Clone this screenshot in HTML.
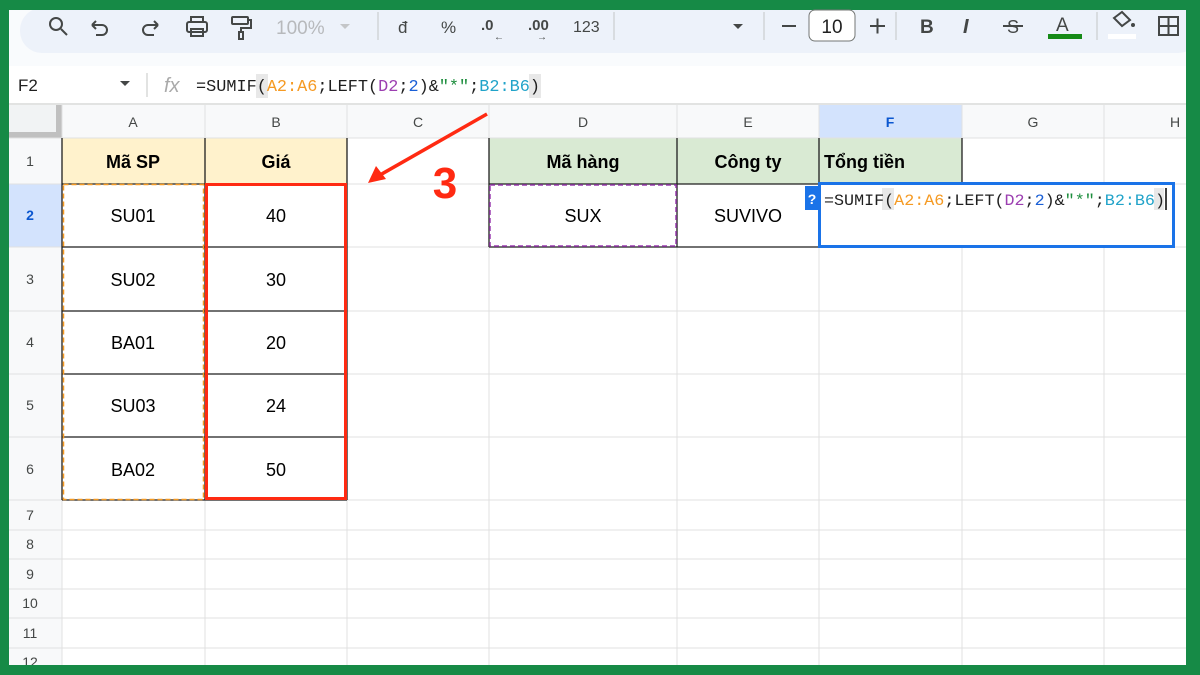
<!DOCTYPE html>
<html><head><meta charset="utf-8"><style>
html,body{margin:0;padding:0;width:1200px;height:675px;overflow:hidden;background:#168a46}
svg{display:block}
text{font-family:"Liberation Sans",Arial,sans-serif}
.m{font-family:"Liberation Mono","DejaVu Sans Mono",monospace}
</style></head><body>
<svg width="1200" height="675" viewBox="0 0 1200 675" xmlns="http://www.w3.org/2000/svg">
<rect x="0" y="0" width="1200" height="675" fill="#168a46"/>
<rect x="9" y="9" width="1177" height="656" fill="#ffffff"/>
<rect x="9" y="9" width="1177" height="57" fill="#f9fbfd"/>
<rect x="20" y="8" width="1180" height="45" rx="22" fill="#edf2fa"/>
<rect x="9" y="8" width="1177" height="2" fill="#168a46"/>
<g fill="none" stroke="#444746" stroke-width="2">
<circle cx="56" cy="24" r="6"/><line x1="61" y1="29" x2="67" y2="35"/>
<path d="M92 25 l4 -4 M92 25 l4 4 M92 25 h10 a5 5 0 0 1 0 10 h-6"/>
<path d="M158 25 l-4 -4 M158 25 l-4 4 M158 25 h-10 a5 5 0 0 0 0 10 h6"/>
<rect x="187" y="22" width="20" height="10" rx="2"/><rect x="191" y="17" width="12" height="5"/><rect x="191" y="29" width="12" height="7"/>
<rect x="232" y="17" width="16" height="7" rx="1"/><path d="M248 20 h3 v8 h-10 v4"/><rect x="239" y="32" width="4" height="7"/>
</g>
<text x="276" y="34" font-size="19" fill="#b7b9bc">100%</text>
<path d="M340 24 l5 5 l5 -5z" fill="#c4c6c8"/>
<line x1="378" y1="12" x2="378" y2="40" stroke="#c4c7c5"/>
<text x="398" y="33" font-size="17" fill="#444746">đ</text>
<text x="441" y="33" font-size="17" fill="#444746">%</text>
<text x="481" y="30" font-size="15" font-weight="bold" fill="#444746">.0</text>
<text x="494" y="40" font-size="10" fill="#444746">←</text>
<text x="528" y="30" font-size="15" font-weight="bold" fill="#444746">.00</text>
<text x="537" y="40" font-size="10" fill="#444746">→</text>
<text x="573" y="32" font-size="16" fill="#444746">123</text>
<line x1="614" y1="12" x2="614" y2="40" stroke="#c4c7c5"/>
<path d="M733 24 l5 5 l5 -5z" fill="#444746"/>
<line x1="764" y1="12" x2="764" y2="40" stroke="#c4c7c5"/>
<line x1="782" y1="26" x2="796" y2="26" stroke="#444746" stroke-width="2"/>
<rect x="809" y="10" width="46" height="31" rx="6" fill="#fff" stroke="#747775"/>
<text x="832" y="33" font-size="19" fill="#1f1f1f" text-anchor="middle">10</text>
<path d="M870 26 h15 M877.5 18.5 v15" stroke="#444746" stroke-width="2"/>
<line x1="896" y1="12" x2="896" y2="40" stroke="#c4c7c5"/>
<text x="920" y="33" font-size="19" font-weight="bold" fill="#444746">B</text>
<text x="963" y="33" font-size="20" font-style="italic" font-family="Liberation Serif" font-weight="bold" fill="#444746">I</text>
<text x="1007" y="33" font-size="18" fill="#444746">S</text><line x1="1003" y1="26" x2="1023" y2="26" stroke="#444746" stroke-width="2"/>
<text x="1056" y="31" font-size="19" fill="#444746">A</text><rect x="1048" y="34" width="34" height="5" fill="#168a17"/>
<line x1="1097" y1="12" x2="1097" y2="40" stroke="#c4c7c5"/>
<path d="M1114 18 l8 -6 l8 8 l-8 6 z" fill="none" stroke="#444746" stroke-width="2"/><circle cx="1133" cy="25" r="2" fill="#444746"/>
<rect x="1108" y="34" width="28" height="5" fill="#fff"/>
<g fill="none" stroke="#444746" stroke-width="2"><rect x="1159" y="17" width="19" height="18"/><path d="M1168.5 17 v18 M1159 26 h19"/></g>
<rect x="9" y="66" width="1177" height="36" fill="#fff"/>
<text x="18" y="91" font-size="17" fill="#1f1f1f">F2</text>
<path d="M120 81 l5 5 l5 -5z" fill="#444746"/>
<line x1="147" y1="73" x2="147" y2="97" stroke="#c4c7c5"/>
<text x="164" y="92" font-size="20" font-style="italic" font-family="Liberation Serif" fill="#aaa">fx</text>
<rect x="256" y="74" width="12" height="24" fill="#e8e8e8"/><rect x="529" y="74" width="12" height="24" fill="#e8e8e8"/>
<text x="196" y="91" font-size="17" class="m" textLength="344" lengthAdjust="spacingAndGlyphs"><tspan fill="#1f1f1f">=SUMIF(</tspan><tspan fill="#f59a23">A2:A6</tspan><tspan fill="#1f1f1f">;LEFT(</tspan><tspan fill="#9c3fb1">D2</tspan><tspan fill="#1f1f1f">;</tspan><tspan fill="#1a5fd6">2</tspan><tspan fill="#1f1f1f">)&amp;</tspan><tspan fill="#1e8e3e">"*"</tspan><tspan fill="#1f1f1f">;</tspan><tspan fill="#21a3c9">B2:B6</tspan><tspan fill="#1f1f1f">)</tspan></text>
<line x1="9" y1="104" x2="1186" y2="104" stroke="#c4c7c5"/>
<rect x="9" y="105" width="53" height="33" fill="#f1f3f4"/>
<rect x="56" y="105" width="6" height="33" fill="#c0c0c0"/><rect x="9" y="132" width="53" height="6" fill="#c0c0c0"/>
<rect x="62" y="105" width="1124" height="33" fill="#f8f9fa"/>
<rect x="819" y="105" width="143" height="33" fill="#d3e3fd"/>
<rect x="9" y="138" width="53" height="527" fill="#f8f9fa"/>
<rect x="9" y="184" width="53" height="63" fill="#d3e3fd"/>
<rect x="62" y="138" width="285" height="46" fill="#fff2cc"/>
<rect x="489" y="138" width="473" height="46" fill="#d9ead3"/>
<g stroke="#e1e1e1" stroke-width="1">
<line x1="62" y1="105" x2="62" y2="665"/><line x1="205" y1="105" x2="205" y2="665"/><line x1="347" y1="105" x2="347" y2="665"/>
<line x1="489" y1="105" x2="489" y2="665"/><line x1="677" y1="105" x2="677" y2="665"/><line x1="819" y1="105" x2="819" y2="665"/>
<line x1="962" y1="105" x2="962" y2="665"/><line x1="1104" y1="105" x2="1104" y2="665"/>
<line x1="9" y1="138" x2="1186" y2="138"/><line x1="9" y1="184" x2="1186" y2="184"/><line x1="9" y1="247" x2="1186" y2="247"/>
<line x1="9" y1="311" x2="1186" y2="311"/><line x1="9" y1="374" x2="1186" y2="374"/><line x1="9" y1="437" x2="1186" y2="437"/>
<line x1="9" y1="500" x2="1186" y2="500"/><line x1="9" y1="530" x2="1186" y2="530"/><line x1="9" y1="559" x2="1186" y2="559"/>
<line x1="9" y1="589" x2="1186" y2="589"/><line x1="9" y1="618" x2="1186" y2="618"/><line x1="9" y1="648" x2="1186" y2="648"/>
</g>
<g stroke="#1f1f1f" stroke-width="1.3">
<line x1="62" y1="184" x2="347" y2="184"/><line x1="62" y1="247" x2="347" y2="247"/><line x1="62" y1="311" x2="347" y2="311"/>
<line x1="62" y1="374" x2="347" y2="374"/><line x1="62" y1="437" x2="347" y2="437"/><line x1="62" y1="500" x2="347" y2="500"/>
<line x1="205" y1="138" x2="205" y2="500"/><line x1="347" y1="138" x2="347" y2="500"/><line x1="62" y1="138" x2="62" y2="500"/>
<line x1="489" y1="138" x2="489" y2="247"/><line x1="677" y1="138" x2="677" y2="247"/><line x1="819" y1="138" x2="819" y2="247"/>
<line x1="962" y1="138" x2="962" y2="184"/>
<line x1="489" y1="184" x2="962" y2="184"/><line x1="489" y1="247" x2="819" y2="247"/>
</g>
<g font-size="14" fill="#444746" text-anchor="middle">
<text x="133" y="127">A</text><text x="276" y="127">B</text><text x="418" y="127">C</text><text x="583" y="127">D</text>
<text x="748" y="127">E</text><text x="890" y="127" font-weight="bold" fill="#0b57d0">F</text><text x="1033" y="127">G</text><text x="1175" y="127">H</text>
<text x="30" y="166">1</text><text x="30" y="220" font-weight="bold" fill="#0b57d0">2</text><text x="30" y="284">3</text><text x="30" y="347">4</text>
<text x="30" y="410">5</text><text x="30" y="474">6</text><text x="30" y="520">7</text><text x="30" y="549">8</text><text x="30" y="579">9</text>
<text x="30" y="608">10</text><text x="30" y="638">11</text><text x="30" y="667">12</text>
</g>
<g font-size="18" fill="#000" text-anchor="middle">
<text x="133" y="168" font-weight="bold">Mã SP</text><text x="276" y="168" font-weight="bold">Giá</text>
<text x="583" y="168" font-weight="bold">Mã hàng</text><text x="748" y="168" font-weight="bold">Công ty</text>
<text x="824" y="168" font-weight="bold" text-anchor="start">Tổng tiền</text>
<text x="133" y="222">SU01</text><text x="276" y="222">40</text>
<text x="133" y="286">SU02</text><text x="276" y="286">30</text>
<text x="133" y="349">BA01</text><text x="276" y="349">20</text>
<text x="133" y="412">SU03</text><text x="276" y="412">24</text>
<text x="133" y="476">BA02</text><text x="276" y="476">50</text>
<text x="583" y="222">SUX</text><text x="748" y="222">SUVIVO</text>
</g>
<rect x="63.5" y="184.5" width="140" height="315" fill="none" stroke="#f59a23" stroke-width="1.5" stroke-dasharray="5 3"/>
<rect x="490" y="185" width="186" height="61" fill="none" stroke="#9c3fb1" stroke-width="1.5" stroke-dasharray="5 3"/>
<rect x="206.5" y="184.5" width="139" height="314" fill="none" stroke="#ff2a12" stroke-width="3"/>
<rect x="819.5" y="183.5" width="354" height="63" fill="#fff" stroke="#1a73e8" stroke-width="3"/>
<rect x="805" y="186" width="14" height="24" fill="#1a73e8"/><text x="812" y="204" font-size="14" font-weight="bold" fill="#fff" text-anchor="middle">?</text>
<rect x="882" y="188" width="12" height="22" fill="#e8e8e8"/><rect x="1154" y="188" width="10" height="22" fill="#e8e8e8"/>
<text x="824" y="205" font-size="16" class="m" textLength="341" lengthAdjust="spacingAndGlyphs"><tspan fill="#1f1f1f">=SUMIF(</tspan><tspan fill="#f59a23">A2:A6</tspan><tspan fill="#1f1f1f">;LEFT(</tspan><tspan fill="#9c3fb1">D2</tspan><tspan fill="#1f1f1f">;</tspan><tspan fill="#1a5fd6">2</tspan><tspan fill="#1f1f1f">)&amp;</tspan><tspan fill="#1e8e3e">"*"</tspan><tspan fill="#1f1f1f">;</tspan><tspan fill="#21a3c9">B2:B6</tspan><tspan fill="#1f1f1f">)</tspan></text>
<line x1="1166" y1="188" x2="1166" y2="210" stroke="#000" stroke-width="1.5"/>
<line x1="487" y1="114" x2="380" y2="175" stroke="#ff2a12" stroke-width="3.5"/>
<path d="M368 183 l8 -17 l10 13z" fill="#ff2a12"/>
<text x="445" y="198" font-size="44" font-weight="bold" fill="#ff2a12" text-anchor="middle">3</text>
<rect x="0" y="665" width="1200" height="10" fill="#168a46"/>
<rect x="1186" y="0" width="14" height="675" fill="#168a46"/>
<rect x="0" y="0" width="9" height="675" fill="#168a46"/>
</svg>
</body></html>
